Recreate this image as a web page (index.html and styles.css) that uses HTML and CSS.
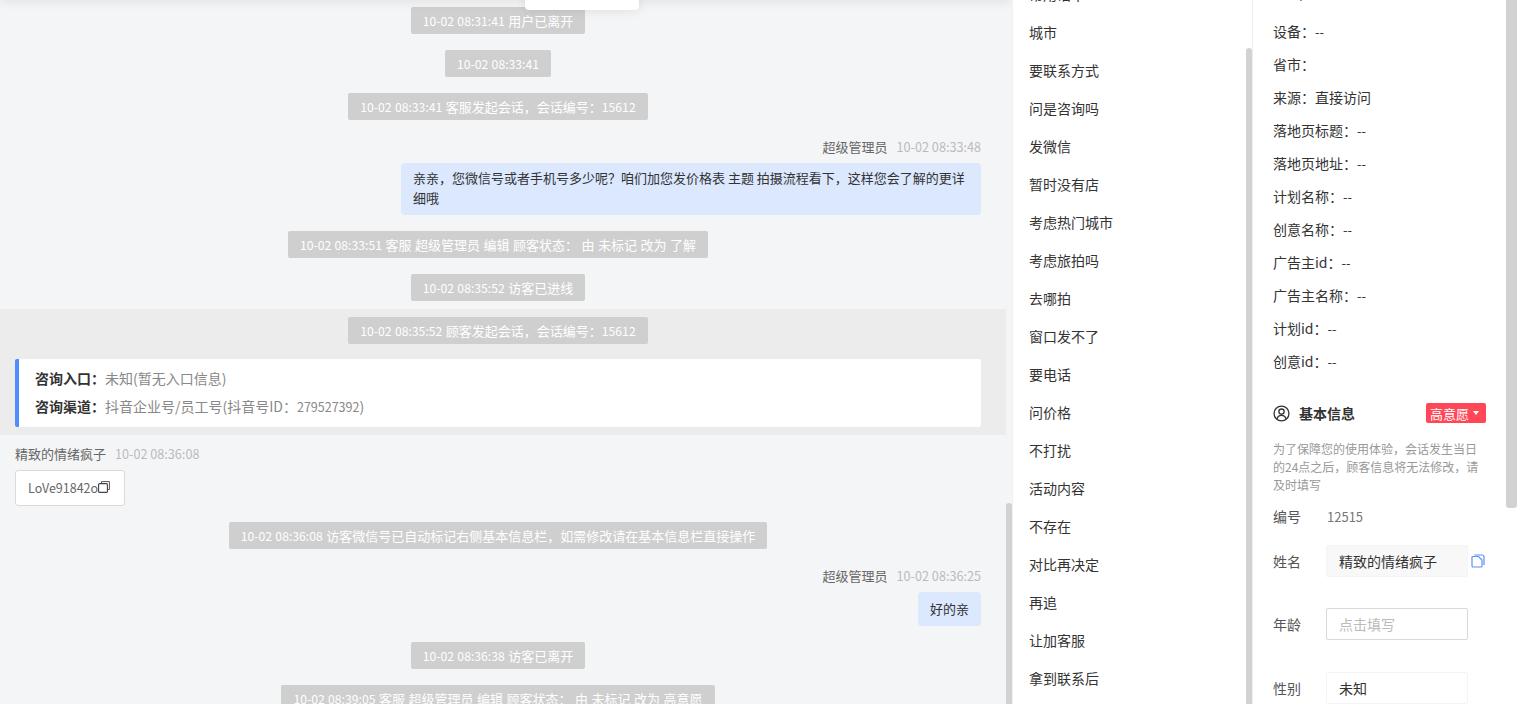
FILE: index.html
```html
<!DOCTYPE html>
<html lang="zh-CN">
<head>
<meta charset="utf-8">
<title>会话详情</title>
<link rel="stylesheet" href="styles.css">
</head>
<body>
<div class="app">
  <main class="chat">
    <div class="chat-top"></div>
    <div class="popover"></div>
    <div class="chat-thumb"></div>
    <div class="chat-log">
      <div class="sys-row"><span class="sys"><span class="num">10-02 08:31:41</span> 用户已离开</span></div>
      <div class="sys-row"><span class="sys"><span class="num">10-02 08:33:41</span></span></div>
      <div class="sys-row"><span class="sys"><span class="num">10-02 08:33:41</span> 客服发起会话&#xFF0C;会话编号&#xFF1A;<span class="num">15612</span></span></div>
      <div class="msg msg-me">
        <div class="meta"><span class="who">超级管理员</span><span class="time">10-02 08:33:48</span></div>
        <div class="bubble">亲亲&#xFF0C;您微信号或者手机号多少呢&#xFF1F;咱们加您发价格表 主题 拍摄流程看下&#xFF0C;这样您会了解的更详细哦</div>
      </div>
      <div class="sys-row"><span class="sys"><span class="num">10-02 08:33:51</span> 客服 超级管理员 编辑 顾客状态&#xFF1A; 由 未标记 改为 了解</span></div>
      <div class="sys-row"><span class="sys"><span class="num">10-02 08:35:52</span> 访客已进线</span></div>
      <section class="session">
        <div class="sys-row"><span class="sys"><span class="num">10-02 08:35:52</span> 顾客发起会话&#xFF0C;会话编号&#xFF1A;<span class="num">15612</span></span></div>
        <div class="entry">
          <p class="entry-line"><b>咨询入口&#xFF1A;</b>未知(暂无入口信息)</p>
          <p class="entry-line"><b>咨询渠道&#xFF1A;</b>抖音企业号/员工号(抖音号ID&#xFF1A;<span class="entry-num">279527392</span>)</p>
        </div>
      </section>
      <div class="msg msg-guest">
        <div class="meta"><span class="who">精致的情绪疯子</span><span class="time">10-02 08:36:08</span></div>
        <div class="wx-card">LoVe91842o<svg class="copy-ico" viewBox="0 0 12 12" width="12" height="12"><path d="M3.500 2.500V.6h7.900v7.900H9.400" fill="none" stroke="#555" stroke-width="1"/><rect x=".6" y="2.600" width="8.800" height="8.800" rx="1" fill="none" stroke="#444" stroke-width="1.100"/></svg></div>
      </div>
      <div class="sys-row"><span class="sys"><span class="num">10-02 08:36:08</span> 访客微信号已自动标记右侧基本信息栏&#xFF0C;如需修改请在基本信息栏直接操作</span></div>
      <div class="msg msg-me">
        <div class="meta"><span class="who">超级管理员</span><span class="time">10-02 08:36:25</span></div>
        <div class="bubble bubble-one">好的亲</div>
      </div>
      <div class="sys-row"><span class="sys"><span class="num">10-02 08:36:38</span> 访客已离开</span></div>
      <div class="sys-row"><span class="sys"><span class="num">10-02 08:39:05</span> 客服 超级管理员 编辑 顾客状态&#xFF1A; 由 未标记 改为 高意愿</span></div>
    </div>
  </main>

  <aside class="tags">
    <div class="tags-thumb"></div>
    <ul class="tag-list">
      <li>常用话术</li><li>城市</li><li>要联系方式</li><li>问是咨询吗</li><li>发微信</li><li>暂时没有店</li><li>考虑热门城市</li><li>考虑旅拍吗</li><li>去哪拍</li><li>窗口发不了</li><li>要电话</li><li>问价格</li><li>不打扰</li><li>活动内容</li><li>不存在</li><li>对比再决定</li><li>再追</li><li>让加客服</li><li>拿到联系后</li>
    </ul>
  </aside>

  <aside class="info">
    <div class="info-thumb"></div>
    <div class="info-body">
      <div class="visit-head"><svg class="pin" viewBox="0 0 14 14" width="14" height="14"><path d="M7 1a4.500 4.500 0 0 0-4.500 4.500C2.500 9 7 13 7 13s4.500-4 4.500-7.500A4.500 4.500 0 0 0 7 1z" fill="#444"/></svg></div>
      <ul class="visit-list">
        <li>设备&#xFF1A;<span class="dash">--</span></li>
        <li>省市&#xFF1A;</li>
        <li>来源&#xFF1A;直接访问</li>
        <li>落地页标题&#xFF1A;<span class="dash">--</span></li>
        <li>落地页地址&#xFF1A;<span class="dash">--</span></li>
        <li>计划名称&#xFF1A;<span class="dash">--</span></li>
        <li>创意名称&#xFF1A;<span class="dash">--</span></li>
        <li>广告主id&#xFF1A;<span class="dash">--</span></li>
        <li>广告主名称&#xFF1A;<span class="dash">--</span></li>
        <li>计划id&#xFF1A;<span class="dash">--</span></li>
        <li>创意id&#xFF1A;<span class="dash">--</span></li>
      </ul>
      <div class="basic-head">
        <svg class="user-ico" viewBox="0 0 18 18" width="17" height="17"><circle cx="9" cy="9" r="7.900" fill="none" stroke="#333" stroke-width="1.400"/><circle cx="9" cy="7" r="2.800" fill="none" stroke="#333" stroke-width="1.400"/><path d="M4.200 14.800c.6-2.500 2.500-3.800 4.800-3.800s4.200 1.300 4.800 3.800" fill="none" stroke="#333" stroke-width="1.400"/></svg>
        <strong class="basic-title">基本信息</strong>
        <span class="intent">高意愿<i class="caret"></i></span>
      </div>
      <p class="notice">为了保障您的使用体验&#xFF0C;会话发生当日的24点之后&#xFF0C;顾客信息将无法修改&#xFF0C;请及时填写</p>
      <div class="field field-id"><label>编号</label><span class="id-val">12515</span></div>
      <div class="field field-name"><label>姓名</label><div class="box box-fill">精致的情绪疯子</div>
        <svg class="doc-ico" viewBox="0 0 14 14" width="14" height="14"><path d="M3.500 1h7.500a2 2 0 0 1 2 2v8" fill="none" stroke="#5b8ff9" stroke-width="1.200"/><path d="M1 3.500a1 1 0 0 1 1-1h5.500L11 6v6a1 1 0 0 1-1 1H2a1 1 0 0 1-1-1z" fill="#fff" stroke="#5b8ff9" stroke-width="1.200"/></svg>
      </div>
      <div class="field field-age"><label>年龄</label><div class="box box-input">点击填写</div></div>
      <div class="field field-sex"><label>性别</label><div class="box box-plain">未知</div></div>
    </div>
  </aside>
</div>
</body>
</html>
```
FILE: styles.css
```css
* { box-sizing: border-box; }
html, body { margin: 0; height: 100%; overflow: hidden; }
body { font-family: "Noto Sans CJK SC", "Noto Sans", sans-serif; font-size: 14px; color: #333; background: #fff; }
ul { list-style: none; margin: 0; padding: 0; }
p { margin: 0; }

.app { display: flex; width: 1517px; height: 704px; overflow: hidden; }

/* chat */
.chat { position: relative; width: 1012px; flex: none; height: 704px; overflow: hidden; background: #f4f5f7; }
.chat-top { position: absolute; left: 0; right: 0; top: -6px; height: 6px; box-shadow: 0 0 12px rgba(0,0,0,.14); }
.popover { position: absolute; left: 525px; top: -6px; width: 114px; height: 16px; background: #fff; border-radius: 4px; box-shadow: 0 2px 10px rgba(0,0,0,.08); }
.chat-thumb { position: absolute; left: 1006px; top: 503px; width: 6px; height: 201px; background: #d2d2d2; border-radius: 3px 3px 0 0; }
.chat-log { display: flex; flex-direction: column; padding: 7px 0 0; }
.sys-row { display: flex; justify-content: center; padding: 0 31px 0 15px; margin-bottom: 16px; }
.sys { display: block; height: 27px; line-height: 27px; padding: 0 12px; background: #cfcfcf; color: #fff; font-size: 13px; word-spacing: .6px; border-radius: 2px; white-space: nowrap; }
.num { font-size: 12.200px; }

.msg { display: flex; flex-direction: column; padding: 0 31px 0 15px; margin-bottom: 16px; }
.msg-me { align-items: flex-end; }
.msg-guest { align-items: flex-start; }
.meta { height: 20px; line-height: 20px; display: flex; gap: 9px; margin-top: 1px; margin-bottom: 6px; }
.who { color: #666; font-size: 13px; }
.time { color: #bbb; font-size: 12.650px; }
.bubble { width: fit-content; max-width: 580px; padding: 5px 12px 7px; background: #dbe8fe; color: #333; font-size: 13px; line-height: 20px; border-radius: 4px; }
.bubble-one { padding: 7px 12px; }

.session { background: #ececec; padding: 8px 25px 8px 15px; margin: -8px 6px 8px 0; }
.session .sys-row { padding: 0; margin-bottom: 15px; }
.entry { background: #fff; border-left: 4px solid #4e8cff; border-radius: 2px; padding: 5px 16px; height: 68px; }
.entry-line { height: 28px; line-height: 28px; color: #888; font-size: 14px; }
.entry-line b { color: #333; font-weight: 700; }
.entry-num { font-size: 12.500px; }

.wx-card { display: flex; align-items: center; height: 36px; width: 110px; padding: 0 12px 2px; background: #fff; border: 1px solid #d9d9d9; border-radius: 3px; color: #666; font-size: 12.500px; white-space: nowrap; }
.copy-ico { flex: none; }

/* tags */
.tags { position: relative; width: 241px; flex: none; height: 704px; overflow: hidden; background: #fff; border-left: 1px solid #f0f0f0; border-right: 1px solid #eee; }
.tags-thumb { position: absolute; right: 0; top: 48px; width: 6px; height: 656px; background: #d2d2d2; border-radius: 3px 3px 0 0; }
.tag-list { margin-top: -25px; padding-left: 16px; }
.tag-list li { height: 38px; line-height: 38px; color: #333; }

/* info */
.info { position: relative; flex: 1; height: 704px; overflow: hidden; background: #fff; }
.info-thumb { position: absolute; left: 253px; top: 0; width: 11px; height: 508px; background: #d2d2d2; border-radius: 0 0 3px 3px; }
.info-body { padding: 0 31px 0 20px; }
.visit-head { height: 2px; overflow: hidden; padding-left: 21px; }
.pin { display: block; margin-top: -12px; }
.visit-list { margin-top: 13px; }
.visit-list li { height: 33px; line-height: 33px; color: #333; }
.dash { font-size: 13px; }

.basic-head { display: flex; align-items: center; height: 22px; margin-top: 24px; }
.user-ico { flex: none; margin-right: 9px; }
.basic-title { font-size: 14px; font-weight: 700; color: #333; }
.intent { display: flex; align-items: center; margin-left: auto; width: 60px; height: 20px; padding-left: 4px; background: #ff4757; color: #fff; font-size: 13px; border-radius: 2px; }
.caret { display: block; width: 0; height: 0; margin-left: 4px; border: 3.500px solid transparent; border-top: 4px solid #fff; border-bottom: 0; }

.notice { margin-top: 16px; color: #999; font-size: 12px; line-height: 18px; }

.field { display: flex; align-items: center; }
.field label { width: 53px; flex: none; color: #555; font-size: 14px; }
.field-id { margin-top: 9px; height: 26px; }
.id-val { color: #777; font-size: 13px; margin-left: 1px; }
.field-name { margin-top: 16px; }
.field-age { margin-top: 31px; }
.field-sex { margin-top: 32px; }
.box { width: 142px; height: 32px; line-height: 30px; padding: 0 12px; font-size: 14px; border: 1px solid transparent; border-radius: 2px; flex: none; }
.box-fill { background: #f8f8f8; border-color: #f4f4f4; }
.box-input { border-color: #d9d9d9; color: #bbb; }
.box-plain { background: #fff; border-color: #f4f4f4; }
.doc-ico { flex: none; margin-left: 3px; }
```
